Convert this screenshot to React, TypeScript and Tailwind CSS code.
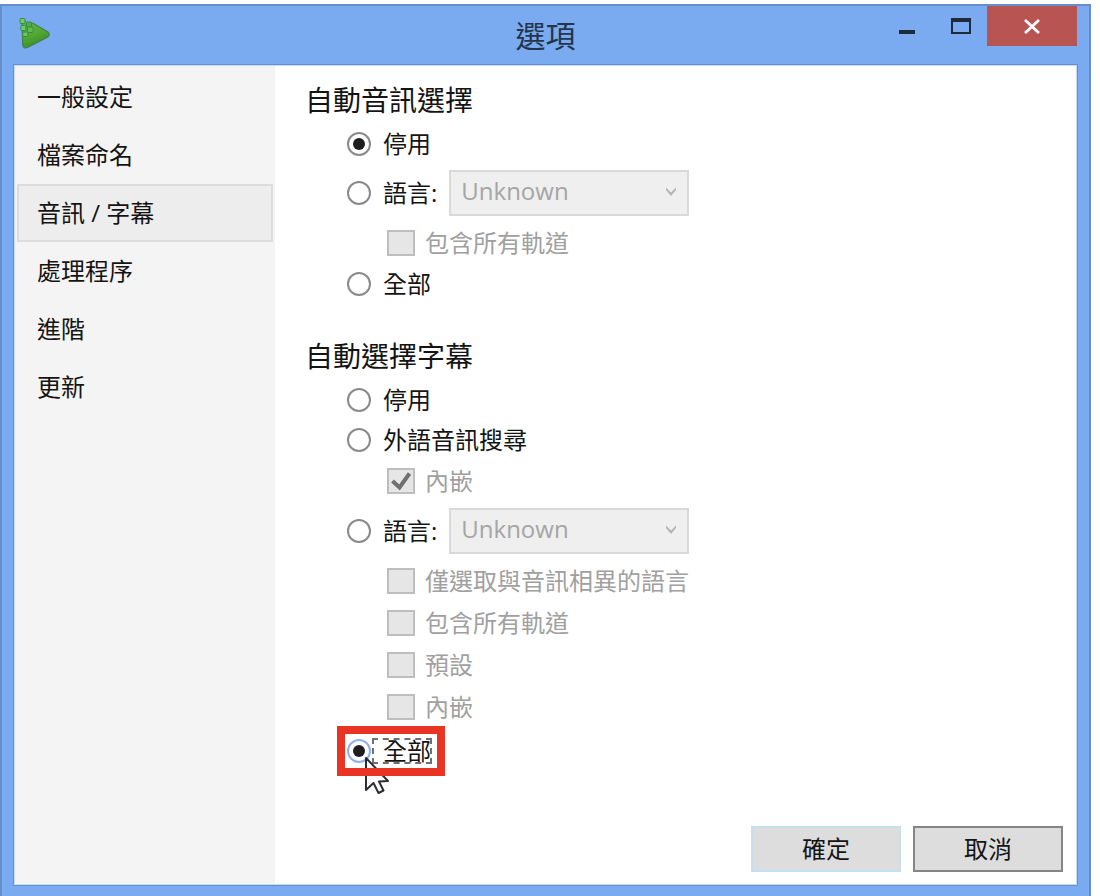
import { useState } from "react";
import type { ReactNode } from "react";
import clsx from "clsx";

const tabs = ["一般設定", "檔案命名", "音訊 / 字幕", "處理程序", "進階", "更新"];

function AppLogo() {
  return (
    <svg viewBox="0 0 34 34" className="w-[34px] h-[34px]" aria-hidden="true">
      <defs>
        <linearGradient id="logoFill" x1="0" y1="0" x2="0.4" y2="1">
          <stop offset="0" stopColor="#62b548" />
          <stop offset="0.6" stopColor="#50a932" />
          <stop offset="1" stopColor="#3c8a28" />
        </linearGradient>
      </defs>
      <path
        d="M4 4 L12 4.5 L30 15 Q32.5 17.5 30 20 L9.5 30.5 Q5.5 32 4.8 28.5 Z"
        fill="url(#logoFill)"
        stroke="#44804a"
        strokeWidth="1.2"
        strokeLinejoin="round"
      />
      <rect x="8" y="1" width="7" height="4.5" fill="#7aabf1" />
      <g stroke="#3a8a4a" strokeWidth="1">
        <rect x="2" y="1.5" width="5" height="5" rx="1" fill="#6ccf66" />
        <rect x="8.5" y="5" width="5" height="5" rx="1" fill="#52ab46" />
        <rect x="2.8" y="8.5" width="5" height="5" rx="1" fill="#6ccf66" />
        <rect x="9.5" y="10" width="5.5" height="5.5" rx="1" fill="#5fbd4c" />
        <rect x="4.8" y="15" width="5" height="4.5" rx="1" fill="#6cc95c" />
      </g>
    </svg>
  );
}

type RadioProps = {
  name: string;
  checked: boolean;
  onChange: () => void;
  focused?: boolean;
  children: ReactNode;
};

function Radio({ name, checked, onChange, focused, children }: RadioProps) {
  return (
    <label className="flex items-center">
      <input
        type="radio"
        name={name}
        checked={checked}
        onChange={onChange}
        className={clsx(
          "appearance-none w-6 h-6 shrink-0 rounded-full border-2 bg-white outline-none flex items-center justify-center",
          "checked:before:block checked:before:w-3 checked:before:h-3 checked:before:rounded-full checked:before:bg-[#1e1e1e]",
          focused ? "border-[#8fb1ee]" : "border-[#8a8a8a]"
        )}
      />
      <span
        className={clsx(
          "ml-0.5 pl-2.5 leading-6",
          focused && "outline-2 -outline-offset-1 outline-dashed outline-[#6f6f6f]"
        )}
      >
        {children}
      </span>
    </label>
  );
}

type CheckProps = {
  label: string;
  defaultChecked?: boolean;
  disabled: boolean;
};

function Check({ label, defaultChecked, disabled }: CheckProps) {
  return (
    <div className="h-[42px] pl-10 flex items-center">
      <label
        className={clsx(
          "flex items-center gap-2.5",
          disabled && "text-[#a0a0a0]"
        )}
      >
        <span className="relative flex">
          <input
            type="checkbox"
            defaultChecked={defaultChecked}
            disabled={disabled}
            className="peer appearance-none w-7 h-[26px] border-2 border-[#bebebe] bg-[#e6e6e6]"
          />
          <svg
            viewBox="0 0 28 26"
            className="hidden peer-checked:block absolute inset-0 w-7 h-[26px] pointer-events-none"
            aria-hidden="true"
          >
            <path
              d="M5.5 13 L12.5 19.5 L22.5 5.5"
              fill="none"
              stroke="#707070"
              strokeWidth="4"
            />
          </svg>
        </span>
        {label}
      </label>
    </div>
  );
}

function LanguageSelect({ label, disabled }: { label: string; disabled: boolean }) {
  return (
    <div className="relative w-60">
      <select
        aria-label={label}
        disabled={disabled}
        className="appearance-none w-full h-[46px] pl-2.5 pr-10 pb-1 border-2 border-[#d9d9d9] bg-[#efefef] disabled:text-[#a5a5a5] disabled:opacity-100"
      >
        <option>Unknown</option>
      </select>
      <svg
        viewBox="0 0 12 12"
        className="absolute right-3 top-4 w-3 h-3 pointer-events-none"
        aria-hidden="true"
      >
        <path
          d="M1 1.5 L1 4 L6 10 L11 4 L11 1.5 L6 6.5 Z"
          fill="#b4b4b4"
        />
      </svg>
    </div>
  );
}

export default function App() {
  const [tab, setTab] = useState("音訊 / 字幕");
  const [audio, setAudio] = useState("disabled");
  const [subtitle, setSubtitle] = useState("all");

  return (
    <div className="min-h-screen pt-1 pr-[9px] bg-white flex flex-col text-2xl text-[#141414] font-['Open_Sans','Noto_Sans_CJK_TC',sans-serif]">
      <div className="flex-1 flex flex-col bg-[#7aabf1] border-t-2 border-x-2 border-[#658fca]">
        {/* Title bar */}
        <header className="h-[58px] px-3 grid grid-cols-[1fr_auto_1fr]">
          <div className="pl-1 pt-[11px]">
            <AppLogo />
          </div>
          <h1 className="pt-2 text-3xl leading-[44px] text-[#24344d]">選項</h1>
          <div className="flex justify-end items-start">
            <button aria-label="最小化" className="w-[52px] h-10">
              <svg viewBox="0 0 52 40" className="w-[52px] h-10">
                <rect x="16" y="24" width="16" height="4" fill="#1f2b3d" />
              </svg>
            </button>
            <button aria-label="最大化" className="w-[52px] h-10">
              <svg viewBox="0 0 52 40" className="w-[52px] h-10">
                <path
                  d="M16 12 H36 V28 H16 Z M18 16 V26 H34 V16 Z"
                  fill="#1f2b3d"
                  fillRule="evenodd"
                />
              </svg>
            </button>
            <button
              aria-label="關閉"
              className="w-[90px] h-10 bg-[#b85552] flex items-center justify-center"
            >
              <svg viewBox="0 0 18 16" className="w-[18px] h-4">
                <path
                  d="M2 2 L16 15 M16 2 L2 15"
                  stroke="#fff"
                  strokeWidth="2.8"
                />
              </svg>
            </button>
          </div>
        </header>

        <div className="flex-1 flex mx-[11px] mb-[10px] p-px border border-[#6790cf] bg-[#c6d9f5]">
          {/* Sidebar */}
          <nav className="w-[260px] shrink-0 p-0.5 bg-[#f4f4f4] flex flex-col">
            {tabs.map((item) => (
              <button
                key={item}
                onClick={() => setTab(item)}
                className={clsx(
                  "h-[58px] pl-[18px] border-2 text-left",
                  item === tab
                    ? "bg-[#ededed] border-[#dcdcdc]"
                    : "border-transparent"
                )}
              >
                {item}
              </button>
            ))}
          </nav>

          <main className="flex-1 flex flex-col pl-[30px] pr-[13px] pt-3.5 pb-3 bg-white">
            {/* Audio */}
            <section>
              <h2 className="h-10 mb-1 text-[28px] leading-10">自動音訊選擇</h2>
              <div className="pl-[42px]">
                <div className="h-10 flex items-center">
                  <Radio
                    name="audio"
                    checked={audio === "disabled"}
                    onChange={() => setAudio("disabled")}
                  >
                    停用
                  </Radio>
                </div>
                <div className="h-[58px] flex items-center gap-3">
                  <Radio
                    name="audio"
                    checked={audio === "language"}
                    onChange={() => setAudio("language")}
                  >
                    語言:
                  </Radio>
                  <LanguageSelect label="音訊語言" disabled={audio !== "language"} />
                </div>
                <Check label="包含所有軌道" disabled={audio !== "language"} />
                <div className="h-10 flex items-center">
                  <Radio
                    name="audio"
                    checked={audio === "all"}
                    onChange={() => setAudio("all")}
                  >
                    全部
                  </Radio>
                </div>
              </div>
            </section>

            {/* Subtitles */}
            <section className="mt-8">
              <h2 className="h-10 mb-1 text-[28px] leading-10">自動選擇字幕</h2>
              <div className="pl-[42px]">
                <div className="h-10 flex items-center">
                  <Radio
                    name="subtitle"
                    checked={subtitle === "disabled"}
                    onChange={() => setSubtitle("disabled")}
                  >
                    停用
                  </Radio>
                </div>
                <div className="h-10 flex items-center">
                  <Radio
                    name="subtitle"
                    checked={subtitle === "foreign"}
                    onChange={() => setSubtitle("foreign")}
                  >
                    外語音訊搜尋
                  </Radio>
                </div>
                <Check label="內嵌" defaultChecked disabled={subtitle !== "foreign"} />
                <div className="h-[58px] flex items-center gap-3">
                  <Radio
                    name="subtitle"
                    checked={subtitle === "language"}
                    onChange={() => setSubtitle("language")}
                  >
                    語言:
                  </Radio>
                  <LanguageSelect label="字幕語言" disabled={subtitle !== "language"} />
                </div>
                <Check label="僅選取與音訊相異的語言" disabled={subtitle !== "language"} />
                <Check label="包含所有軌道" disabled={subtitle !== "language"} />
                <Check label="預設" disabled={subtitle !== "language"} />
                <Check label="內嵌" disabled={subtitle !== "language"} />
                <div className="relative w-fit h-[46px] flex items-center">
                  <Radio
                    name="subtitle"
                    checked={subtitle === "all"}
                    onChange={() => setSubtitle("all")}
                    focused={subtitle === "all"}
                  >
                    全部
                  </Radio>
                  {/* Mouse pointer, under the highlight frame */}
                  <svg
                    viewBox="0 0 26 40"
                    className="absolute left-[17px] top-7 w-[26px] h-10 pointer-events-none"
                    aria-hidden="true"
                  >
                    <path
                      d="M2 2 L2 34 L9.5 27 L14.5 37 L19.5 34.5 L15 25.5 L24 25 Z"
                      fill="#fff"
                      stroke="#2b2d33"
                      strokeWidth="2"
                      strokeLinejoin="round"
                    />
                  </svg>
                  <div className="absolute -left-2.5 -right-3.5 -inset-y-0.5 border-8 border-[#e93323] pointer-events-none" />
                </div>
              </div>
            </section>

            <div className="mt-auto flex justify-end gap-3">
              <button className="w-[150px] h-[46px] border-2 border-[#c4dfee] bg-[#dddddd]">
                確定
              </button>
              <button className="w-[150px] h-[46px] border-2 border-[#858585] bg-[#dddddd]">
                取消
              </button>
            </div>
          </main>
        </div>
      </div>
    </div>
  );
}
